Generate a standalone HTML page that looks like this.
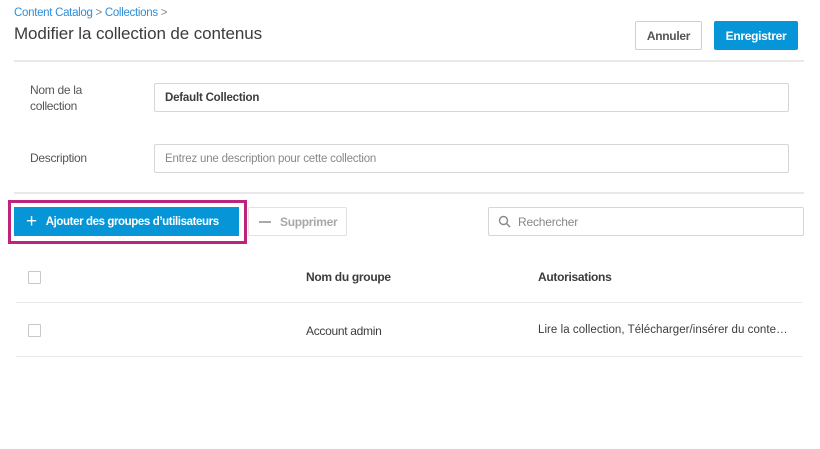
<!DOCTYPE html>
<html><head><meta charset="utf-8"><style>
*{box-sizing:border-box;margin:0;padding:0}
body{width:820px;height:449px;background:#fff;font-family:"Liberation Sans",sans-serif;position:relative;overflow:hidden;color:#3c3c3c}
.a{position:absolute;white-space:nowrap}
.line{position:absolute;height:2px;background:#e8e8e8}
.inp{position:absolute;border:1.5px solid #d6d6d6;border-radius:2px;font-size:11.5px;padding-left:10px;display:flex;align-items:center;white-space:nowrap;letter-spacing:-0.2px}
.cb{position:absolute;width:13px;height:13px;border:1.5px solid #c8c8c8;border-radius:1px}
.s{letter-spacing:-0.3px}
</style></head><body>
<div class="a s" style="left:14px;top:7px;font-size:11.5px;color:#2e8fd8">Content Catalog <span style="color:#888">&gt;</span> Collections <span style="color:#888">&gt;</span></div>
<div class="a" style="left:14px;top:24px;font-size:17px;color:#3c3c3c;letter-spacing:-0.1px">Modifier la collection de contenus</div>
<div class="a" style="left:635px;top:21px;width:67px;height:29px;border:1.5px solid #cfcfcf;border-radius:2px;font-size:12px;font-weight:bold;color:#555;display:flex;align-items:center;justify-content:center;letter-spacing:-0.3px">Annuler</div>
<div class="a" style="left:714px;top:21px;width:84px;height:29px;background:#0696d7;border-radius:2px;font-size:12px;font-weight:bold;color:#fff;display:flex;align-items:center;justify-content:center;letter-spacing:-0.3px">Enregistrer</div>
<div class="line" style="left:14px;top:60px;width:790px"></div>
<div class="a s" style="left:30px;top:82px;font-size:12px;line-height:16px;color:#555">Nom de la<br>collection</div>
<div class="inp" style="left:154px;top:83px;width:635px;height:29px;font-weight:bold;color:#3c3c3c">Default Collection</div>
<div class="a s" style="left:30px;top:151px;font-size:12px;color:#555">Description</div>
<div class="inp" style="left:154px;top:144px;width:635px;height:29px;color:#888">Entrez une description pour cette collection</div>
<div class="line" style="left:14px;top:192px;width:790px"></div>
<div class="a" style="left:8px;top:200px;width:239px;height:44px;border:3px solid #c0247a"></div>
<div class="a" style="left:14px;top:207px;width:225px;height:29px;background:#0696d7;color:#fff;font-size:11.5px;font-weight:bold;display:flex;align-items:center;padding-left:12px;letter-spacing:-0.4px"><span style="font-size:19px;font-weight:normal;margin-right:9px;line-height:1">+</span>Ajouter des groupes d’utilisateurs</div>
<div class="a" style="left:248px;top:207px;width:99px;height:29px;border:1.5px solid #e2e2e2;border-radius:2px;color:#a8a8a8;font-size:12px;font-weight:bold;display:flex;align-items:center;padding-left:10px;letter-spacing:-0.3px"><span style="display:inline-block;width:12px;height:2px;background:#aaa;margin-right:9px"></span>Supprimer</div>
<div class="inp" style="left:488px;top:207px;width:316px;height:29px;color:#888;padding-left:9px;font-size:12px"><svg width="13" height="13" viewBox="0 0 13 13" style="margin-right:7px"><circle cx="5.5" cy="5.5" r="4" fill="none" stroke="#888" stroke-width="1.4"/><path d="M8.5 8.5L12 12" stroke="#888" stroke-width="1.5"/></svg>Rechercher</div>
<div class="cb" style="left:28px;top:271px"></div>
<div class="a s" style="left:306px;top:270px;font-size:12px;font-weight:bold">Nom du groupe</div>
<div class="a s" style="left:538px;top:270px;font-size:12px;font-weight:bold">Autorisations</div>
<div class="line" style="left:16px;top:302px;width:786px;height:1px"></div>
<div class="cb" style="left:28px;top:324px"></div>
<div class="a s" style="left:306px;top:324px;font-size:12px">Account admin</div>
<div class="a" style="left:538px;top:324px;font-size:11.5px;letter-spacing:0.05px">Lire la collection, Télécharger/insérer du conte…</div>
<div class="line" style="left:16px;top:356px;width:786px;height:1px"></div>
</body></html>
